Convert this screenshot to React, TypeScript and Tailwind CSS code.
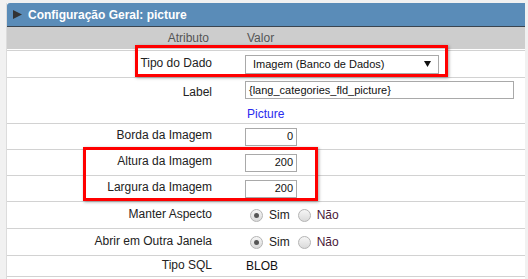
import React from 'react';

const font = { fontFamily: '"Liberation Sans", Arial, sans-serif' };

function Radio({ checked }: { checked?: boolean }) {
  return (
    <span className="relative inline-flex h-[13px] w-[13px] items-center justify-center rounded-full border border-[#b4b4b4] bg-gradient-to-b from-[#f6f6f6] to-[#dadada]">
      {checked && <span className="h-[5px] w-[5px] rounded-full bg-[#555]" />}
    </span>
  );
}

function Row({
  label,
  h,
  children,
  top,
}: {
  label: string;
  h: string;
  children?: React.ReactNode;
  top?: boolean;
}) {
  return (
    <div className={`flex border-b border-[#d2d2d2] ${h} ${top ? 'items-start' : 'items-center'}`}>
      <div className={`w-[210px] shrink-0 pr-[5px] text-right text-[12px] text-[#222] ${top ? 'pt-[5px]' : '-mt-[3px]'}`}>
        {label}
      </div>
      <div className="flex-1 pl-[28px] text-[12px] text-[#222]">{children}</div>
    </div>
  );
}

function NumInput({ value }: { value: string }) {
  return (
    <div className="flex h-[18px] w-[52px] items-center justify-end border border-[#a9a9a9] bg-white pr-[3px] text-[11px] text-[#111]">
      {value}
    </div>
  );
}

function RadioPair() {
  return (
    <div className="ml-[5px] flex items-center">
      <Radio checked />
      <span className="ml-[6px] text-[#222]">Sim</span>
      <span className="ml-[8px]" />
      <Radio />
      <span className="ml-[6px] text-[#4a1838]">Não</span>
    </div>
  );
}

export default function App() {
  return (
    <div className="relative h-[279px] w-[528px] overflow-hidden bg-[#f1f1f1] pt-[3px]" style={font}>
      <div className="ml-[6px] mr-[3px] h-full border-l border-[#dcdcdc] bg-white">
        {/* panel header */}
        <div className="flex h-[24px] items-center rounded-tl-[3px] border-b border-[#3a4550] bg-[#5a8cb8] pl-[6px]">
          <svg width="9" height="9" viewBox="0 0 9 9" className="mr-[6px]">
            <path d="M0 0 L9 4.5 L0 9 Z" fill="#333" />
          </svg>
          <span className="text-[12px] font-bold text-white">Configuração Geral: picture</span>
        </div>

        {/* column titles */}
        <div className="flex h-[22px] items-center bg-[#cdcdcd] text-[12px] text-[#555]">
          <div className="w-[210px] shrink-0 pr-[8px] text-right">Atributo</div>
          <div className="pl-[30px]">Valor</div>
        </div>

        <div className="mt-px border-t border-[#d2d2d2]">
          <Row label="Tipo do Dado" h="h-[27px]">
            <div className="flex h-[19px] w-[194px] items-center justify-between border border-[#a9a9a9] bg-white pl-[7px] pr-[7px] text-[11px] text-[#111]">
              <span>Imagem (Banco de Dados)</span>
              <svg width="7" height="6" viewBox="0 0 7 6">
                <path d="M0 0 L7 0 L3.5 6 Z" fill="#111" />
              </svg>
            </div>
          </Row>

          <Row label="Label" h="h-[46px]" top>
            <div className="pt-[3px]">
              <div className="flex h-[18px] w-[269px] items-center border border-[#a9a9a9] bg-white pl-[3px] text-[11px] text-[#111]">
                {'{lang_categories_fld_picture}'}
              </div>
              <div className="mt-[6px] pl-[2px] text-[12px] text-[#2a2aee]">Picture</div>
            </div>
          </Row>

          <Row label="Borda da Imagem" h="h-[26px]">
            <NumInput value="0" />
          </Row>
          <Row label="Altura da Imagem" h="h-[26px]">
            <NumInput value="200" />
          </Row>
          <Row label="Largura da Imagem" h="h-[26px]">
            <NumInput value="200" />
          </Row>
          <Row label="Manter Aspecto" h="h-[27px]">
            <RadioPair />
          </Row>
          <Row label="Abrir em Outra Janela" h="h-[27px]">
            <RadioPair />
          </Row>
          <Row label="Tipo SQL" h="h-[21px]">
            <span className="pl-px text-[#111]">BLOB</span>
          </Row>
        </div>
      </div>

      {/* annotation boxes */}
      <div className="pointer-events-none absolute left-[135px] top-[45px] h-[32px] w-[313px] border-[3px] border-[#ff0000] shadow-[1px_1px_3px_rgba(0,0,0,0.35)]" />
      <div className="pointer-events-none absolute left-[83px] top-[147px] h-[54px] w-[235px] border-[3px] border-[#ff0000] shadow-[1px_1px_3px_rgba(0,0,0,0.35)]" />
    </div>
  );
}
